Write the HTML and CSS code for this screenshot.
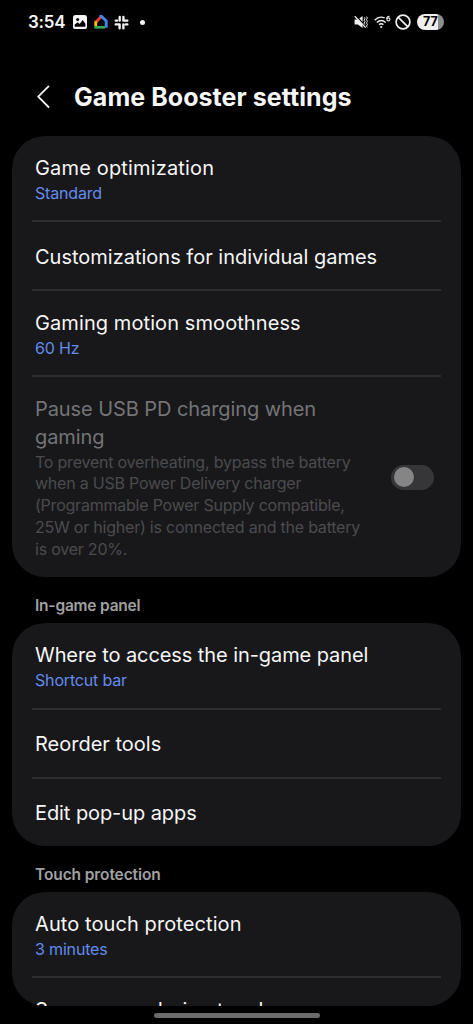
FILE: index.html
```html
<!DOCTYPE html>
<html lang="en">
<head>
<meta charset="utf-8">
<title>Game Booster settings</title>
<link rel="stylesheet" href="styles.css">
</head>
<body>
<div class="screen">
  <header class="status">
    <div class="status-left">
      <span class="clock">3:54</span>
      <svg class="i-photo" width="14" height="14" viewBox="0 0 14 14"><rect width="14" height="14" rx="2.6" fill="#f4f4f4"/><circle cx="4.7" cy="4.6" r="1.5" fill="#000"/><path d="M1.7 11.8V9.6l3-2.3 2 1.6 3-4 2.7 3.8v3.1z" fill="#000"/></svg>
      <svg class="i-home" width="14" height="14" viewBox="0 0 14 14"><path d="M1.6 7.5 7 1.8" stroke="#ea4335" stroke-width="2.9" fill="none"/><path d="M6.1 1.6 7 .8l5.2 5.3v6.6" stroke="#4285f4" stroke-width="2.9" fill="none"/><path d="M1.7 6.2v5" stroke="#fbbc04" stroke-width="2.8"/><path d="M.4 12.3h10.7" stroke="#34a853" stroke-width="2.6"/></svg>
      <svg class="i-slack" width="15" height="15" viewBox="0 0 15 15" fill="none" stroke="#f4f4f4" stroke-width="2.4" stroke-linecap="round"><path d="M5.7 1.9v3.7M1.7 5.6h1.4M9.4 1.9v3.7M9.4 5.6h3.9M1.7 9.4h3.9M5.6 9.4v3.9M9.4 9.4v3.9M11.8 9.4h1.5"/><path d="M7.5 0v15M0 7.5h15" stroke="#000" stroke-width=".8"/></svg>
      <i class="dot"></i>
    </div>
    <div class="status-right">
      <svg width="14" height="14" viewBox="0 0 14 14"><path d="M.6 4.5h3.2L8.6 1v12L3.8 9.5H.6z" fill="#eee"/><path d="M2.2 1 9 8.2" stroke="#000" stroke-width="1.3"/><path d="m.8 1.2 10.8 11.4" stroke="#eee" stroke-width="1.3"/><path d="m10.2 2.2.8 1.5-1 1.5 1 1.5-1 1.5 1 1.5M12.4 1.5l1 1.6-1 1.6 1 1.6-1 1.6 1 1.6-1 1.6 1 1.2" fill="none" stroke="#eee" stroke-width="1"/></svg>
      <svg class="i-wifi" width="17" height="14" viewBox="0 0 17 14" fill="none" stroke="#eee" stroke-width="1.4"><path d="M.7 5.2C3.4 2.3 7.2 1.5 10.6 2.9M2.8 7.5c2.7-2.5 6.2-2.5 8.9 0M5 9.6c1.4-1.2 3-1.2 4.4 0"/><circle cx="7.2" cy="12" r="1.1" fill="#eee" stroke="none"/><path d="M15.6 1.2c-2-.1-2.8 1.2-2.8 2.8" stroke-width="1.1"/><circle cx="14.4" cy="4.4" r="1.5" stroke-width="1.1"/></svg>
      <svg class="i-block" width="16" height="16" viewBox="0 0 16 16" fill="none" stroke="#eee" stroke-width="1.7"><circle cx="8" cy="8" r="6.9"/><path d="m3.1 3.1 9.8 9.8"/></svg>
      <span class="battery">77</span>
    </div>
  </header>

  <div class="appbar">
    <svg width="14" height="24" viewBox="0 0 14 24"><path d="M12.5 1.4 2.2 11.6 12.5 22" fill="none" stroke="#f2f2f2" stroke-width="1.8" stroke-linecap="round" stroke-linejoin="round"/></svg>
    <h1>Game Booster settings</h1>
  </div>

  <main class="content">
    <section class="card">
      <div class="row"><div class="title t-wide">Game optimization</div><div class="value">Standard</div></div>
      <div class="row single"><div class="title">Customizations for individual games</div></div>
      <div class="row"><div class="title t-loose">Gaming motion smoothness</div><div class="value">60 Hz</div></div>
      <div class="row disabled">
        <div class="copy">
          <div class="title t-tight">Pause USB PD charging when<br>gaming</div>
          <div class="desc">To prevent overheating, bypass the battery<br>when a USB Power Delivery charger<br>(Programmable Power Supply compatible,<br>25W or higher) is connected and the battery<br>is over 20%.</div>
        </div>
        <span class="toggle"></span>
      </div>
    </section>

    <h2>In-game panel</h2>
    <section class="card panel">
      <div class="row"><div class="title t-tight">Where to access the in-game panel</div><div class="value">Shortcut bar</div></div>
      <div class="row single"><div class="title">Reorder tools</div></div>
      <div class="row single"><div class="title t-tight">Edit pop-up apps</div></div>
    </section>

    <h2 class="h-touch">Touch protection</h2>
    <section class="card last">
      <div class="row"><div class="title t-loose">Auto touch protection</div><div class="value">3 minutes</div></div>
      <div class="row"><div class="title"><span class="t-narrow">Screensaver</span> during touch</div></div>
    </section>
  </main>
  <footer class="nav"><span class="handle"></span></footer>
</div>
</body>
</html>
```
FILE: styles.css
```css
* { box-sizing: border-box; }
body { margin: 0; background: #000; font-family: Inter, sans-serif; color: #f6f6f7; }
svg { display: block; flex: none; }
.screen { width: 473px; height: 1024px; overflow: hidden; display: flex; flex-direction: column; background: #000; }
.status { height: 44px; flex: none; padding: 0 29px 0 28px; display: flex; justify-content: space-between; align-items: center; }
.status-left, .status-right { display: flex; align-items: center; }
.clock { width: 37px; font-size: 17px; font-weight: 600; letter-spacing: -0.2px; margin-right: 8px; white-space: nowrap; }
.i-home { margin-left: 7px; }
.i-slack { margin-left: 6px; }
.dot { width: 5px; height: 5px; border-radius: 50%; background: #f4f4f4; margin-left: 11px; }
.i-wifi { margin-left: 6px; }
.i-block { margin-left: 4px; }
.battery { width: 27px; height: 16px; margin-left: 6px; border-radius: 8px; background: linear-gradient(90deg, #efefef 77%, #8d8d8d 77%); color: #000; font-size: 12.5px; line-height: 16px; font-weight: 700; text-align: center; }
.appbar { height: 91.5px; flex: none; display: flex; align-items: center; padding: 14px 0 0 36px; gap: 24px; }
h1 { margin: 0; font-size: 25px; line-height: 30px; font-weight: 700; letter-spacing: 0.05px; white-space: nowrap; }
.content { height: 870px; flex: none; overflow: hidden; padding: 0 12px; }
.card { background: #18181a; border-radius: 33px; padding: 0 20px; overflow: hidden; }
.row { height: 86px; padding: 18px 3px 0; border-bottom: 2px solid #2d2d2f; white-space: nowrap; }
.row:last-child { border-bottom: 0; }
.single { height: 69px; padding-top: 21px; }
.title { font-size: 20px; line-height: 28px; }
.t-wide { letter-spacing: 0.16px; }
.t-loose { letter-spacing: 0.09px; }
.t-tight { letter-spacing: -0.08px; }
.t-narrow { letter-spacing: -0.75px; }
.value { font-size: 16px; line-height: 22px; letter-spacing: -0.17px; color: #638cec; }
.disabled { height: 200px; display: flex; justify-content: space-between; align-items: center; padding: 1px 7px 0 3px; }
.disabled .copy { padding-top: 1px; }
.disabled .title { color: #747477; }
.desc { font-size: 16px; line-height: 21.8px; letter-spacing: -0.22px; color: #4b4b4e; padding-top: 1px; }
.toggle { width: 43px; height: 25px; border-radius: 13px; background: #363639; padding: 2.5px; flex: none; }
.toggle::before { content: ""; display: block; width: 20px; height: 20px; border-radius: 50%; background: #858585; }
h2 { margin: 0; height: 46px; padding: 18px 23px 0; font-size: 15.5px; line-height: 22px; letter-spacing: -0.2px; font-weight: 600; color: #a0a0a3; }
.panel .row:first-child { height: 87px; }
.panel .single { padding-top: 20px; }
.panel .single:last-child { height: 67.5px; }
.h-touch { height: 45.5px; padding-top: 17.5px; letter-spacing: -0.1px; }
.last { height: 114px; }
.nav { height: 18px; display: flex; justify-content: center; padding-top: 7px; }
.handle { width: 166px; height: 5px; border-radius: 3px; background: #6a6a6a; }
```
